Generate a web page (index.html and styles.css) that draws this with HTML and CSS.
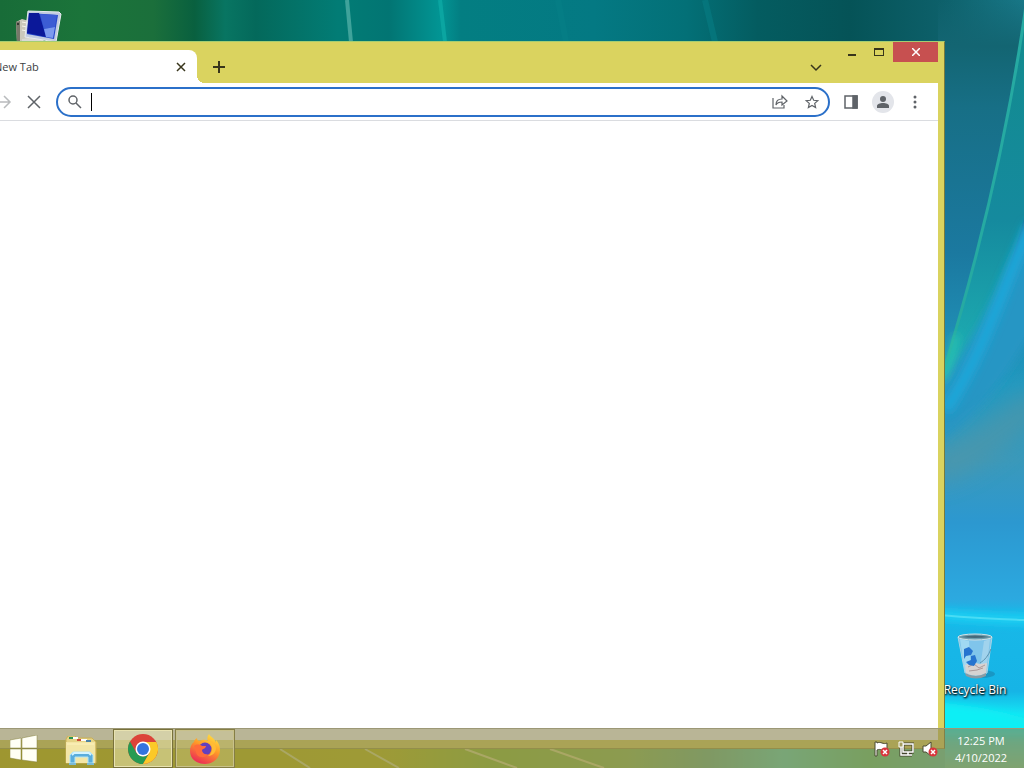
FILE: index.html
```html
<!DOCTYPE html>
<html lang="en">
<head>
    <meta charset="UTF-8">
    <meta name="viewport" content="width=device-width, initial-scale=1.0">
    <title>Desktop</title>
    <link rel="stylesheet" href="styles.css">
</head>
<body>
    <main class="desktop">
        <svg class="wallpaper" viewBox="0 0 1024 768" preserveAspectRatio="none" aria-hidden="true">
            <defs>
                <linearGradient id="sky" x1="0" y1="0" x2="1" y2="0">
                    <stop offset="0" stop-color="#186c38"/>
                    <stop offset=".08" stop-color="#1b743a"/>
                    <stop offset=".15" stop-color="#1b6f3b"/>
                    <stop offset=".19" stop-color="#09603f"/>
                    <stop offset=".22" stop-color="#087562"/>
                    <stop offset=".25" stop-color="#04695b"/>
                    <stop offset=".33" stop-color="#027c75"/>
                    <stop offset=".38" stop-color="#027573"/>
                    <stop offset=".43" stop-color="#029594"/>
                    <stop offset=".45" stop-color="#037e82"/>
                    <stop offset=".58" stop-color="#047983"/>
                    <stop offset=".67" stop-color="#037077"/>
                    <stop offset=".74" stop-color="#045c60"/>
                    <stop offset=".83" stop-color="#055357"/>
                    <stop offset=".92" stop-color="#0d606a"/>
                    <stop offset="1" stop-color="#187787"/>
                </linearGradient>
                <linearGradient id="side" x1="0" y1="0" x2="0" y2="1">
                    <stop offset="0" stop-color="#136572" stop-opacity="0"/>
                    <stop offset=".06" stop-color="#136572"/>
                    <stop offset=".14" stop-color="#176f86"/>
                    <stop offset=".33" stop-color="#1b79a0"/>
                    <stop offset=".5" stop-color="#2299c0"/>
                    <stop offset=".6" stop-color="#3a99bb"/>
                    <stop offset=".68" stop-color="#2c98d0"/>
                    <stop offset=".78" stop-color="#2ca9e0"/>
                    <stop offset=".8" stop-color="#18b8e8"/>
                    <stop offset=".9" stop-color="#16b4e6"/>
                    <stop offset=".93" stop-color="#14e4f4"/>
                    <stop offset="1" stop-color="#70d0a0"/>
                </linearGradient>
                <linearGradient id="grass" x1="0" y1="0" x2="1" y2="0">
                    <stop offset="0" stop-color="#bcb200"/>
                    <stop offset=".4" stop-color="#bcbc10"/>
                    <stop offset=".52" stop-color="#90be30"/>
                    <stop offset=".66" stop-color="#90be50"/>
                    <stop offset=".75" stop-color="#70b880"/>
                    <stop offset=".83" stop-color="#60d8b0"/>
                    <stop offset=".92" stop-color="#60c878"/>
                    <stop offset="1" stop-color="#60c8a0"/>
                </linearGradient>
                <linearGradient id="ribbon" x1="0" y1="0" x2="0" y2="1">
                    <stop offset="0" stop-color="#128b8c"/>
                    <stop offset=".55" stop-color="#158a9e"/>
                    <stop offset="1" stop-color="#20b8b8"/>
                </linearGradient>
                <filter id="soft" filterUnits="userSpaceOnUse" x="900" y="150" width="150" height="618">
                    <feGaussianBlur stdDeviation="4"/>
                </filter>
                <filter id="haze" filterUnits="userSpaceOnUse" x="900" y="350" width="150" height="200">
                    <feGaussianBlur stdDeviation="12"/>
                </filter>
            </defs>
            <rect width="1024" height="768" fill="url(#sky)"/>
            <rect x="938" y="0" width="86" height="768" fill="url(#side)"/>
            <rect y="745" width="945" height="23" fill="url(#grass)"/>
            <path d="M347 0l4 42" stroke="#3fa39b" stroke-width="4"/>
            <path d="M440 0l5 42" stroke="#0ba5a1" stroke-width="4"/>
            <path d="M558 0l8 42M705 0l10 42" stroke="#078087" stroke-width="6" opacity=".5"/>
            <path d="M1026 0C1012 110 986 230 944 368V400C985 330 1012 270 1026 210Z" fill="url(#ribbon)"/>
            <path d="M1040 205C1002 270 988 330 930 392V450C980 420 1010 370 1040 320Z" fill="#2896c4" filter="url(#soft)"/>
            <path d="M1030 225C998 300 985 350 946 410" fill="none" stroke="#1fa9dc" stroke-width="10" filter="url(#soft)"/>
            <path d="M1026 5C1010 120 985 235 944 370" fill="none" stroke="#26aaa2" stroke-width="3"/>
            <path d="M956 335Q950 365 942 380" fill="none" stroke="#2cc5b0" stroke-width="6" filter="url(#soft)"/>
            <path d="M1040 400C1000 430 970 460 930 470" fill="none" stroke="#5295a5" stroke-width="28" opacity=".7" filter="url(#haze)"/>
            <path d="M940 615Q985 619 1036 620" fill="none" stroke="#1bd6f6" stroke-width="8" filter="url(#soft)"/>
            <path d="M940 615Q985 619 1026 620" fill="none" stroke="#48dcf5" stroke-width="2"/>
            <path d="M930 702Q985 705 1036 722V735H930Z" fill="#10eff5" filter="url(#soft)"/>
            <path d="M280 749l30 19M365 749l34 19M465 749l52 19M550 749l54 19" stroke="#d9dc86" stroke-width="2"/>
        </svg>

        <svg class="computer-icon" viewBox="0 0 48 34" role="img" aria-label="Computer">
            <path d="M1 12l6-3 7 2v22H2Z" fill="#cbc9bb"/>
            <path d="M1 12l4-1v22H2Z" fill="#77786a"/>
            <path d="M7 12l5 1M7 16l5 1M7 20l5 1" stroke="#f5f4e9"/>
            <circle cx="3" cy="14" r="1" fill="#222"/>
            <path d="M7 29l14-2 8 3-2 3H7Z" fill="#d8d9d5"/>
            <path d="M13 1l31 1 2 2-5 28-31-5Z" fill="#c1cbe0" stroke="#e7ebef"/>
            <path d="M14 3l29 2-4 24-27-5Z" fill="#2447ca"/>
            <path d="M14 3h10l7 24-19-4Z" fill="#0b1899"/>
            <path d="M25 4l17 1-2 12-11 2Z" fill="#3c5cd4"/>
            <path d="M29 19l11-2-2 11-7-1Z" fill="#7c9aee"/>
        </svg>

        <div class="recycle-bin">
            <svg class="bin-icon" viewBox="0 0 48 48" aria-hidden="true">
                <ellipse cx="30" cy="42" rx="14" ry="4" fill="#1a84ad" opacity=".6"/>
                <path d="M7 5h34l-5 36q-11 6-22 0Z" fill="#80c5eb" stroke="#a7d5e6"/>
                <path d="M9 7l9 2 2 33-6-2Z" fill="#b6e4f6" opacity=".6"/>
                <path d="M33 9l6-2-4 34-7 2Z" fill="#c2e2f0" opacity=".5"/>
                <path d="M14 33l7-3 8 2 7-1-1 10q-10 5-20 0Z" fill="#d6d3d2"/>
                <path d="M17 35l6-3 5 4 6-3M18 39l8-1 6-2" fill="none" stroke="#ab9a9a"/>
                <path d="M14 41q11 6 21 0v3q-10 5-20 0Z" fill="#8a9ba4"/>
                <path d="M13 17l5-2 4 4-2 4-5 1-2 3ZM20 24l4-1 2 6-3 5-5-1-3-3 5-2Z" fill="#2674cf"/>
                <path d="M29 31q7-4 11-14" fill="none" stroke="#5b93b0"/>
                <ellipse cx="24" cy="5" rx="17" ry="3" fill="#6f9dac" stroke="#d1e2e6"/>
                <path d="M10 5q14-3 28 0-14 2-28 0" fill="#456879"/>
            </svg>
            <span>Recycle Bin</span>
        </div>

        <section class="window" aria-label="Browser">
            <header class="titlebar">
                <div class="tab">
                    <span class="tab-title">New Tab</span>
                    <button class="tab-close" aria-label="Close tab">
                        <svg width="10" height="10" viewBox="0 0 10 10"><path d="M1 1l8 8M9 1l-8 8"/></svg>
                    </button>
                </div>
                <button class="new-tab" aria-label="New tab">
                    <svg width="12" height="12" viewBox="0 0 12 12"><path d="M6 0v12M0 6h12"/></svg>
                </button>
                <button class="tab-search" aria-label="Search tabs">
                    <svg width="12" height="8" viewBox="0 0 12 8"><path d="M1 1l5 5 5-5"/></svg>
                </button>
                <div class="window-buttons">
                    <button class="minimize" aria-label="Minimize">
                        <svg width="10" height="10" viewBox="0 0 10 10"><path d="M1 8h8"/></svg>
                    </button>
                    <button class="maximize" aria-label="Maximize">
                        <svg width="10" height="8" viewBox="0 0 10 8"><path class="fill" d="M0 0h10v8H0ZM1 2v5h8V2Z"/></svg>
                    </button>
                    <button class="close" aria-label="Close">
                        <svg width="8" height="8" viewBox="0 0 8 8"><path d="M0 0l8 8M8 0L0 8"/></svg>
                    </button>
                </div>
            </header>

            <nav class="toolbar">
                <button class="forward" aria-label="Forward">
                    <svg width="16" height="16" viewBox="0 0 16 16"><path d="M1 8h13M8 2l6 6-6 6"/></svg>
                </button>
                <button class="stop" aria-label="Stop loading">
                    <svg width="14" height="14" viewBox="0 0 14 14"><path d="M1 1l12 12M13 1L1 13"/></svg>
                </button>
                <div class="address-bar">
                    <svg class="search-icon" width="14" height="14" viewBox="0 0 14 14" aria-hidden="true"><circle cx="5" cy="5" r="4"/><path d="M8 8l5 5"/></svg>
                    <span class="caret"></span>
                    <input type="text" class="address" aria-label="Address and search bar">
                    <button aria-label="Share">
                        <svg width="16" height="16" viewBox="0 0 16 16"><path d="M1 4v10h11v-3M4 11c0-4 2-6 6-6V2l5 5-5 4V8c-3 0-5 1-6 3Z"/></svg>
                    </button>
                    <button aria-label="Bookmark this tab">
                        <svg width="16" height="16" viewBox="0 0 16 16"><path d="M8 2.500l1.700 3.800 4.100.4-3.100 2.700.9 4.100L8 11.400l-3.600 2.100.9-4.100-3.100-2.700 4.100-.4Z"/></svg>
                    </button>
                </div>
                <button aria-label="Side panel">
                    <svg width="14" height="14" viewBox="0 0 14 14"><path d="M1 1h12v12H1Z"/><path class="fill" d="M9 1h4v12H9Z"/></svg>
                </button>
                <button class="profile" aria-label="Profile">
                    <svg width="14" height="14" viewBox="0 0 14 14"><circle cx="7" cy="4" r="3"/><path d="M1 13v-2c0-2 3-3 6-3s6 1 6 3v2Z"/></svg>
                </button>
                <button class="menu" aria-label="Menu">
                    <svg width="4" height="14" viewBox="0 0 4 14"><circle cx="2" cy="2" r="1.500"/><circle cx="2" cy="7" r="1.500"/><circle cx="2" cy="12" r="1.500"/></svg>
                </button>
            </nav>
            <div class="page"></div>
        </section>

        <footer class="taskbar">
            <button class="start" aria-label="Start">
                <svg width="28" height="28" viewBox="0 0 28 28"><path d="M0 5l11-2v10H0ZM12 3l15-3v13H12ZM0 14h11v11L0 23ZM12 14h15v13l-15-2Z" fill="#fffff5" stroke="#85803f" stroke-width=".5"/></svg>
            </button>
            <button class="task explorer" aria-label="File Explorer">
                <svg width="32" height="30" viewBox="0 0 32 30">
                    <path d="M1 3l2-3h7l2 2h15l4 4v21H1Z" fill="#e6d486" stroke="#c8af57"/>
                    <path d="M8 1h5v2H8ZM16 3h6v2h-6Z" fill="#fff"/>
                    <path d="M4 1h4v2H4Z" fill="#2b9250"/><path d="M12 3h4v2h-4Z" fill="#cc4937"/><path d="M21 4h5v2h-5Z" fill="#4e83a5"/>
                    <path d="M1 6h29v21H1Z" fill="#f3e6a6"/>
                    <path d="M2 8h27" stroke="#fff2bd"/>
                    <path d="M5 27v-8l3-3h17l3 3v8h-5v-6H10v6Z" fill="#5aaddc" stroke="#b5e5f4"/>
                    <path d="M7 19l2-2h15l2 2" fill="none" stroke="#d4f4ff" stroke-width="2"/>
                    <path d="M4 28h7M22 28h7" stroke="#7cbbd4" stroke-width="2"/>
                </svg>
            </button>
            <button class="task active" aria-label="Google Chrome">
                <svg width="30" height="30" viewBox="0 0 30 30">
                    <circle cx="15" cy="15" r="15" fill="#dc4339"/>
                    <path d="M2 7.500L8.500 19A7.500 7.500 0 0 0 15 22.500L11.500 29.600A15 15 0 0 1 2 7.500Z" fill="#269b52"/>
                    <path d="M8.500 19A7.500 7.500 0 0 0 21 19.500L15 30H11.500Z" fill="#269b52"/>
                    <path d="M21.500 18.700L15 30A15 15 0 0 0 28.300 8H15Z" fill="#fbc928"/>
                    <circle cx="15" cy="15" r="7.500" fill="#fff"/>
                    <circle cx="15" cy="15" r="6" fill="#3474de"/>
                </svg>
            </button>
            <button class="task running" aria-label="Firefox">
                <svg width="30" height="30" viewBox="0 0 30 30">
                    <defs>
                        <linearGradient id="fire" x1=".8" y1="0" x2=".3" y2="1">
                            <stop offset="0" stop-color="#ffe442"/>
                            <stop offset=".45" stop-color="#ff9b28"/>
                            <stop offset="1" stop-color="#ec2857"/>
                        </linearGradient>
                    </defs>
                    <path d="M19 0c-2 3-2 5-1 7-3-2-6-1-8 0-2 0-3-1-3-3-2 1-3 3-3 4-3 2-4 6-4 9 0 8 7 13 15 13s15-6 15-14c0-5-2-8-4-10v3c-1-5-6-6-7-9Z" fill="url(#fire)"/>
                    <circle cx="15" cy="15" r="6.500" fill="#6340bd"/>
                    <path d="M4 12c2-2 6-2 8 0h4c0 2-3 3-4 4 0 3 3 5 6 4-3 5-11 4-12-2Z" fill="#ff6c3a"/>
                    <path d="M13 8c5-1 9 2 9 6 0 4-1 6-4 8 5 0 8-4 8-8-1-5-4-7-8-7Z" fill="#ffbc35"/>
                </svg>
            </button>

            <div class="tray">
                <svg width="16" height="16" viewBox="0 0 16 16" role="img" aria-label="Action Center">
                    <path d="M1 1v14h2V9c4-2 6 2 10 0V2C9 4 7 0 3 2V1Z" fill="#fff" stroke="#4b4a32"/>
                    <circle cx="11" cy="11" r="4.500" fill="#d9353c"/><path d="M9 9l4 4M13 9l-4 4" stroke="#fff" stroke-width="1.500"/>
                </svg>
                <svg width="16" height="16" viewBox="0 0 16 16" role="img" aria-label="Network">
                    <path d="M5 3h10v8H5ZM10 11v3M6 14h8M3 6v8h4" fill="none" stroke="#44442d" stroke-width="3"/>
                    <path d="M5 3h10v8H5ZM10 11v3M6 14h8M3 6v8h4" fill="none" stroke="#fff" stroke-width="1.500"/>
                    <path d="M1 1h4v5H1Z" fill="#a49d61" stroke="#fff"/>
                </svg>
                <svg width="16" height="16" viewBox="0 0 16 16" role="img" aria-label="Volume muted">
                    <path d="M1 5h3l5-4v14l-5-4H1Z" fill="#fff" stroke="#4b4a32"/>
                    <circle cx="11" cy="11" r="4.500" fill="#d9353c"/><path d="M9 9l4 4M13 9l-4 4" stroke="#fff" stroke-width="1.500"/>
                </svg>
            </div>
            <div class="clock">
                <span>12:25 PM</span>
                <span>4/10/2022</span>
            </div>
        </footer>
    </main>
</body>
</html>
```
FILE: styles.css
```css
* {
    box-sizing: border-box;
}

body {
    margin: 0;
    font-family: "Open Sans", "Noto Sans", sans-serif;
    font-size: 12px;
    color: #3c4043;
}

button {
    display: flex;
    flex-shrink: 0;
    align-items: center;
    justify-content: center;
    padding: 0;
    border: none;
    background: transparent;
}

/* Desktop and wallpaper */
.desktop {
    position: relative;
    height: 100vh;
    overflow: hidden;
    background: #087d86;
}

.wallpaper {
    position: absolute;
    width: 100%;
    height: 100%;
}

.computer-icon {
    position: absolute;
    top: 10px;
    left: 15px;
    width: 48px;
    height: 34px;
}

.recycle-bin {
    position: absolute;
    right: 9px;
    bottom: 69px;
    display: flex;
    flex-direction: column;
    align-items: center;
    width: 80px;
    color: white;
    line-height: 18px;
    text-shadow: 1px 1px 2px black, 0 1px 2px black;
}

.bin-icon {
    width: 48px;
    height: 50px;
}

/* Browser window, partly off the left edge */
.window {
    position: absolute;
    top: 41px;
    right: 79px;
    bottom: 19px;
    left: -80px;
    display: flex;
    flex-direction: column;
    padding: 0 6px 8px 7px;
    background: #dad35f;
    border: 1px solid #a19d45;
    border-top-color: #a4cd72;
    border-right-color: #777b3d;
}

.titlebar {
    display: flex;
    flex-shrink: 0;
    height: 41px;
}

.titlebar path {
    fill: none;
    stroke: #38351b;
    stroke-width: 2;
}

.tab {
    position: relative;
    display: flex;
    align-items: center;
    width: 269px;
    margin-top: 8px;
    padding: 0 9px 0 66px;
    background: white;
    border-radius: 8px 8px 0 0;
}

.tab::after {
    content: "";
    position: absolute;
    right: -8px;
    bottom: 0;
    width: 8px;
    height: 8px;
    background: radial-gradient(circle at 100% 0, transparent 8px, white 8px);
}

.tab-title {
    flex: 1;
    font-size: 11px;
}

.tab-close {
    width: 14px;
    height: 20px;
}

.tab-close path {
    stroke-width: 1.5;
}

.new-tab {
    width: 28px;
    height: 28px;
    margin: 11px 0 0 8px;
}

.tab-search {
    width: 28px;
    height: 28px;
    margin: 12px 9px 0 auto;
}

.tab-search path {
    stroke-width: 1.5;
}

.window-buttons {
    display: flex;
    height: 20px;
}

.minimize {
    width: 26px;
}

.maximize {
    width: 28px;
}

.titlebar .fill {
    fill: #38351b;
    fill-rule: evenodd;
    stroke: none;
}

.window-buttons .close {
    width: 45px;
    background: #c75050;
}

.window-buttons .close path {
    stroke: white;
    stroke-width: 1.5;
}

/* Toolbar */
.toolbar {
    display: flex;
    flex-shrink: 0;
    align-items: center;
    height: 38px;
    padding: 0 7px 0 66px;
    background: white;
    border-bottom: 1px solid #dadce0;
}

.toolbar button {
    width: 32px;
    height: 28px;
}

.toolbar path,
.toolbar circle {
    fill: none;
    stroke: #5f6368;
    stroke-width: 1.5;
}

.toolbar .forward {
    width: 20px;
}

.toolbar .forward path {
    stroke: #b9bbbd;
}

.toolbar .stop {
    width: 28px;
    margin: 0 8px 0 6px;
}

.toolbar .fill {
    fill: #5f6368;
}

.address-bar {
    display: flex;
    flex: 1;
    align-items: center;
    height: 30px;
    min-width: 0;
    margin-right: 5px;
    padding-left: 10px;
    background: white;
    border: 2px solid #2b70c9;
    border-radius: 15px;
}

.address-bar button path {
    stroke-width: 1.2;
}

.caret {
    width: 1px;
    height: 18px;
    margin-left: 9px;
    background: black;
}

.address {
    flex: 1;
    min-width: 0;
    border: none;
    outline: none;
    font: inherit;
}

.toolbar .profile {
    width: 22px;
    height: 22px;
    margin: 0 5px;
    background: #e3e5ea;
    border-radius: 50%;
}

.toolbar .profile path,
.toolbar .profile circle,
.toolbar .menu circle {
    fill: #5f6368;
    stroke: none;
}

.page {
    flex: 1;
    background: white;
}

/* Taskbar */
.taskbar {
    position: absolute;
    right: 0;
    bottom: 0;
    left: 0;
    display: flex;
    height: 40px;
    background: rgba(138, 132, 80, 0.6);
    border-top: 1px solid #9c9876;
}

.start {
    width: 48px;
}

.task {
    width: 60px;
    border: 1px solid transparent;
}

.task + .task {
    margin-left: 2px;
}

.explorer {
    margin: 4px 0 0 3px;
}

.active {
    background: rgba(240, 236, 185, 0.5);
    border-color: #e6dfaa;
    outline: 1px solid #78713b;
    outline-offset: -1px;
    box-shadow: inset 0 0 0 1px #e8e2b0;
}

.running {
    background: rgba(225, 220, 160, 0.3);
    border-color: #857e45;
    box-shadow: inset 0 0 0 1px #c8c18a;
}

.tray {
    display: flex;
    align-items: center;
    gap: 8px;
    margin-left: auto;
}

.clock {
    display: flex;
    flex-direction: column;
    justify-content: center;
    width: 60px;
    margin: 1px 13px 0 13px;
    color: white;
    font-size: 11px;
    line-height: 17px;
    text-align: center;
}
```
